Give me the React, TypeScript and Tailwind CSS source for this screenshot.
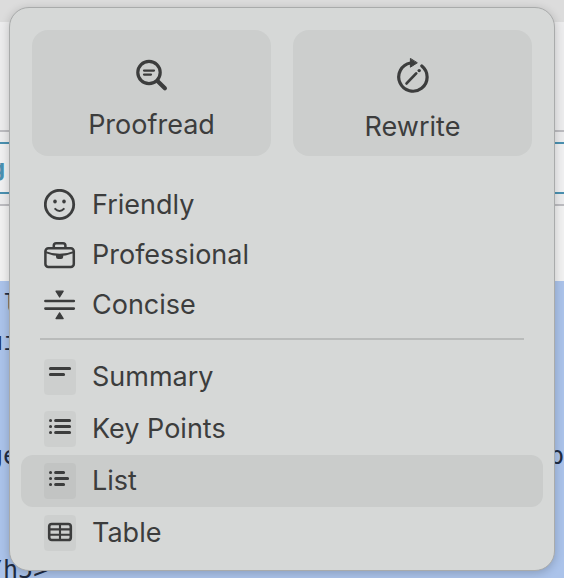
import type { ReactNode } from "react";

interface MenuItem {
  label: string;
  icon: ReactNode;
}

function ProofreadIcon() {
  return (
    <svg width="32" height="34" viewBox="0 0 32 34" fill="none" stroke="currentColor" strokeLinecap="round" aria-hidden="true">
      <circle cx="13" cy="14.5" r="11.2" strokeWidth="3.2" />
      <path d="M21.5 23l7.4 7.2" strokeWidth="4.2" />
      <path d="M8 12.6h10M8 16.6h7" strokeWidth="2.2" />
    </svg>
  );
}

function RewriteIcon() {
  return (
    <svg width="32" height="36" viewBox="0 0 32 36" fill="none" stroke="currentColor" strokeLinecap="round" aria-hidden="true">
      <path d="M24.8 7.9A14.2 14.2 0 1 1 13.5 5" strokeWidth="3.2" />
      <path d="M13.4 0.8v8.4l6.6-4.2z" fill="currentColor" strokeWidth="1" strokeLinejoin="round" />
      <path d="M9.6 25.4l9.6-10" strokeWidth="2.8" />
      <circle cx="22.2" cy="12.6" r="1.7" fill="currentColor" stroke="none" />
    </svg>
  );
}

function FriendlyIcon() {
  return (
    <svg width="32" height="32" viewBox="0 0 32 32" fill="none" stroke="currentColor" strokeLinecap="round" aria-hidden="true">
      <circle cx="15.5" cy="15.5" r="14.2" strokeWidth="2.8" />
      <ellipse cx="11" cy="12.5" rx="1.8" ry="2.1" fill="currentColor" stroke="none" />
      <ellipse cx="20" cy="12.5" rx="1.8" ry="2.1" fill="currentColor" stroke="none" />
      <path d="M11.2 19.9c2.4 2.7 6.2 2.7 8.6 0" strokeWidth="2" />
    </svg>
  );
}

function ProfessionalIcon() {
  return (
    <svg width="32" height="32" viewBox="0 0 32 32" fill="none" stroke="currentColor" strokeWidth="2.5" strokeLinejoin="round" aria-hidden="true">
      <rect x="1.4" y="9.2" width="28.4" height="18.8" rx="3" />
      <path d="M9.8 8.7V6.6q0-2.4 2.4-2.4h6.8q2.4 0 2.4 2.4v2.1" />
      <path d="M1.6 13.1q14 5.6 28 0" strokeWidth="2.1" />
      <path d="M12 15.9h7.2v1.8q0 2.2-2.2 2.2h-2.8q-2.2 0-2.2-2.2z" fill="currentColor" stroke="none" />
    </svg>
  );
}

function ConciseIcon() {
  return (
    <svg width="32" height="32" viewBox="0 0 32 32" fill="none" stroke="currentColor" strokeLinecap="round" strokeLinejoin="round" aria-hidden="true">
      <path d="M1.4 12h28.4M1.4 19.6h28.4" strokeWidth="2.6" />
      <path d="M12 2.2h7.2l-3.6 5.8zM12 29.6h7.2l-3.6-5.8z" fill="currentColor" strokeWidth="1.2" />
    </svg>
  );
}

// 32x36 tile glyphs, drawn on the full tile
function Tile({ children }: { children: ReactNode }) {
  return (
    <span className="rounded-sm bg-black/4">
      <svg width="32" height="36" viewBox="0 0 32 36" fill="none" stroke="currentColor" strokeWidth="3" strokeLinecap="round" aria-hidden="true">
        {children}
      </svg>
    </span>
  );
}

const tones: MenuItem[] = [
  { label: "Friendly", icon: <FriendlyIcon /> },
  { label: "Professional", icon: <ProfessionalIcon /> },
  { label: "Concise", icon: <ConciseIcon /> },
];

const formats: MenuItem[] = [
  {
    label: "Summary",
    icon: <Tile><path d="M6.4 9.5h19.2M6.4 15.5h13.2" /></Tile>,
  },
  {
    label: "Key Points",
    icon: <Tile><path d="M6.5 9.5h.1M6.5 15.5h.1M6.5 21.5h.1M11.6 9.5h14M11.6 15.5h14M11.6 21.5h14" /></Tile>,
  },
  {
    label: "List",
    icon: <Tile><path d="M6.5 9.5h.1M6.5 15.5h.1M6.5 21.5h.1M11.6 9.5h8M11.6 15.5h12M11.6 21.5h8" /></Tile>,
  },
  {
    label: "Table",
    icon: (
      <Tile>
        <rect x="5.2" y="9" width="21.6" height="16" rx="2.6" strokeWidth="2.6" />
        <path d="M5.2 14.4h21.6M5.2 19.7h21.6M16 9v16" strokeWidth="2.1" />
      </Tile>
    ),
  },
];

const codeLines = [" l", "ui", "", "", "ge", "", "", "/h5>"];

function EditorPage() {
  return (
    <div className="flex min-h-screen flex-col overflow-hidden bg-[#ececed]">
      <div className="h-[22px] bg-[#dcdcdc]" />
      <div className="h-[108px]" />
      <div className="border-y-2 border-[#bcbcc0] py-[10px]">
        <div className="-mx-3 flex h-[52px] items-center rounded-lg border-2 border-[#4a90b0] bg-[#f0f0f1]">
          <span className="font-['Inter',sans-serif] text-2xl font-bold text-[#4a90b0]">g</span>
        </div>
      </div>
      <div className="h-[75px] bg-[#f1f1f1]" />
      <div className="grow bg-[#abc3ea] pt-1 font-['DejaVu_Sans_Mono',monospace] text-[25px] leading-[38px] text-[#1f2c42]">
        {codeLines.map((line, i) => (
          <div key={i} className="-ml-3 flex h-[38px] justify-between whitespace-pre">
            <span>{line}</span>
            {line === "ge" && <span>p</span>}
          </div>
        ))}
      </div>
    </div>
  );
}

export default function App() {
  const active = "List";

  return (
    <main className="relative h-screen overflow-hidden">
      <EditorPage />

      {/* Writing tools popover */}
      <div className="absolute inset-x-[9px] top-[7px] rounded-[20px] border border-[#a9abab] bg-[#d6d8d7] pb-[11px] font-['Inter',sans-serif] text-[27px] leading-[34px] text-[#3c3d3d] shadow-[0_2px_10px_rgba(0,0,0,0.2)]">
        <div className="grid grid-cols-2 gap-[22px] p-[22px] pb-6">
          <button type="button" className="flex h-[126px] flex-col items-center gap-4 rounded-2xl bg-[#cccecd] pt-7">
            <ProofreadIcon />
            Proofread
          </button>
          <button type="button" className="flex h-[126px] flex-col items-center gap-4 rounded-2xl bg-[#cccecd] pt-7">
            <RewriteIcon />
            Rewrite
          </button>
        </div>

        <div className="px-[11px]">
          {tones.map((item) => (
            <button key={item.label} type="button" className="flex h-[50px] w-full items-center gap-4 px-[23px] text-left">
              {item.icon}
              {item.label}
            </button>
          ))}
        </div>

        <hr className="mx-[30px] mt-2 mb-[11px] border-t-2 border-[#b9bbba]" />

        <div className="px-[11px]">
          {formats.map((item) => (
            <button
              key={item.label}
              type="button"
              className={`flex h-[52px] w-full items-center gap-4 rounded-xl px-[23px] text-left ${
                item.label === active ? "bg-[#cacccb]" : ""
              }`}
            >
              {item.icon}
              {item.label}
            </button>
          ))}
        </div>
      </div>
    </main>
  );
}
